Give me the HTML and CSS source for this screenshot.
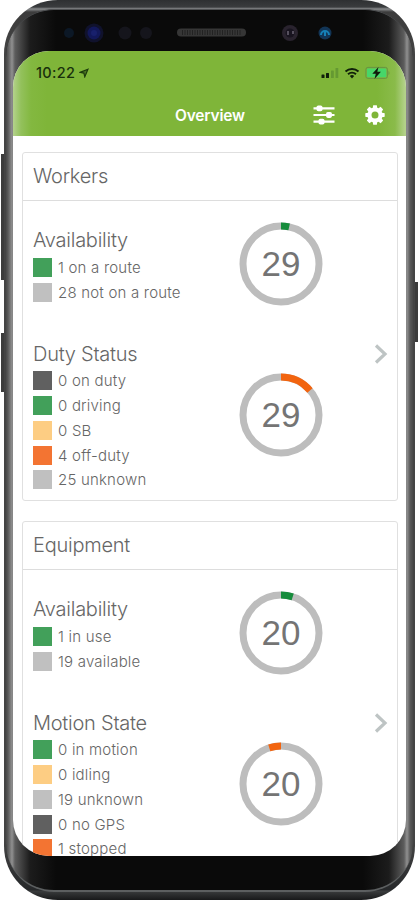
FILE: index.html
```html
<!DOCTYPE html>
<html lang="en">
<head>
  <meta charset="UTF-8" />
  <meta name="viewport" content="width=device-width, initial-scale=1.0"/>
  <title>Overview</title>
  <link rel="stylesheet" href="styles.css">
</head>
<body>
  <div class="device">
    <span class="side-button volume"></span>
    <span class="side-button bixby"></span>
    <span class="side-button power"></span>
    <div class="phone">
      <div class="bezel">
        <div class="sensors">
          <svg width="300" height="34" viewBox="0 0 300 34">
            <circle cx="15" cy="17" r="5" fill="#0c1826"/>
            <circle cx="40" cy="17" r="9.5" fill="#10122c"/>
            <circle cx="40" cy="17" r="6.5" fill="#12185a"/>
            <circle cx="40" cy="17" r="3" fill="#18206c"/>
            <circle cx="71" cy="17" r="6.5" fill="#15151c"/>
            <circle cx="92" cy="17" r="6" fill="#15151c"/>
            <rect x="123" y="12.500" width="69" height="8" rx="4" fill="#363636"/>
            <path d="M128 16.500h60" stroke="#222" stroke-width="5" stroke-dasharray="1 1.500"/>
            <circle cx="236" cy="17" r="8" fill="#29232e"/>
            <circle cx="236" cy="17" r="4.500" fill="#18141f"/>
            <path d="M234 15v4M239 15v3" stroke="#777080" stroke-width="1.300"/>
            <circle cx="271" cy="17" r="6.500" fill="#123556"/>
            <path d="M267 19a4 4 0 0 1 8 0M271 16v4" fill="none" stroke="#167fb5" stroke-width="2"/>
          </svg>
        </div>

        <div class="screen">
          <header class="topbar">
            <div class="status">
              <span class="time">10:22</span>
              <svg class="location" width="10" height="10" viewBox="0 0 10 10"><path d="M1 4.400L9 1.200 5.800 8.800 4.900 5.100z" fill="#4c7524" stroke="#1c3a0c" stroke-width="1.200"/></svg>
              <svg class="signal" width="18" height="12" viewBox="0 0 18 12">
                <rect x="0.500" y="7.500" width="3" height="3.500" rx=".6" fill="#10200a"/>
                <rect x="5" y="6" width="3" height="5" rx=".6" fill="#10200a"/>
                <rect x="10" y="3.500" width="2.800" height="7.500" rx=".6" fill="#659932"/>
                <rect x="14.500" y="1" width="2.800" height="10" rx=".6" fill="#659932"/>
              </svg>
              <svg class="wifi" width="16" height="12" viewBox="0 0 16 12">
                <path d="M1.500 4.500a9.500 9.500 0 0 1 13 0M4 7.300a6 6 0 0 1 8 0" fill="none" stroke="#10200a" stroke-width="2"/>
                <path d="M5.800 9a3.300 3.300 0 0 1 4.400 0L8 11.500z" fill="#10200a"/>
              </svg>
              <svg class="battery" width="25" height="14" viewBox="0 0 25 14">
                <rect x=".9" y="1.400" width="21.500" height="11" rx="2" fill="#80b33c" stroke="#679444"/>
                <rect x="2" y="2.500" width="19.300" height="8.800" rx="1" fill="#47d669"/>
                <path d="M23.500 5v4c1.300-.5 1.300-3.500 0-4z" fill="#679444"/>
                <path d="M13.500 1L7.300 7.800h3.500L9.500 13l6.400-7.200h-3.600z" fill="#111b0c"/>
              </svg>
            </div>
            <div class="nav">
              <h1>Overview</h1>
              <svg class="filters" width="22" height="20" viewBox="0 0 22 20">
                <path d="M.5 3.300h21M.5 10h21M.5 16.700h21" stroke="#fff" stroke-width="2.200"/>
                <rect x="3.500" y=".4" width="6" height="5.800" rx="1.800" fill="#fff"/>
                <rect x="13" y="7.100" width="6" height="5.800" rx="1.800" fill="#fff"/>
                <rect x="5.500" y="13.800" width="6" height="5.800" rx="1.800" fill="#fff"/>
              </svg>
              <svg class="gear" width="20" height="20" viewBox="0 0 20 20">
                <circle cx="10" cy="10" r="5.500" fill="none" stroke="#fff" stroke-width="4"/>
                <g fill="#fff">
                  <path id="tooth" d="M7.500 4L8.200.3h3.600L12.500 4z"/>
                  <use href="#tooth" transform="rotate(45 10 10)"/>
                  <use href="#tooth" transform="rotate(90 10 10)"/>
                  <use href="#tooth" transform="rotate(135 10 10)"/>
                  <use href="#tooth" transform="rotate(180 10 10)"/>
                  <use href="#tooth" transform="rotate(225 10 10)"/>
                  <use href="#tooth" transform="rotate(270 10 10)"/>
                  <use href="#tooth" transform="rotate(315 10 10)"/>
                </g>
              </svg>
            </div>
          </header>

          <main class="content">
            <section class="card">
              <h2>Workers</h2>
              <div class="metric">
                <div class="info">
                  <h3>Availability</h3>
                  <ul>
                    <li><i class="green"></i>1 on a route</li>
                    <li><i class="gray"></i>28 not on a route</li>
                  </ul>
                </div>
                <div class="ring">
                  <svg width="84" height="84" viewBox="0 0 84 84">
                    <circle class="track" cx="42" cy="42" r="38"/>
                    <circle class="arc arc-green" cx="42" cy="42" r="38" pathLength="29" stroke-dasharray="1 28"/>
                  </svg>
                  <span>29</span>
                </div>
              </div>
              <div class="metric">
                <div class="info">
                  <h3>Duty Status</h3>
                  <ul>
                    <li><i class="dark"></i>0 on duty</li>
                    <li><i class="green"></i>0 driving</li>
                    <li><i class="yellow"></i>0 SB</li>
                    <li><i class="orange"></i>4 off-duty</li>
                    <li><i class="gray"></i>25 unknown</li>
                  </ul>
                </div>
                <div class="ring">
                  <svg width="84" height="84" viewBox="0 0 84 84">
                    <circle class="track" cx="42" cy="42" r="38"/>
                    <circle class="arc arc-orange" cx="42" cy="42" r="38" pathLength="29" stroke-dasharray="4 25"/>
                  </svg>
                  <span>29</span>
                </div>
                <svg class="chevron" width="14" height="20" viewBox="0 0 14 20"><path d="M2 1.500L11 10l-9 8.500"/></svg>
              </div>
            </section>

            <section class="card">
              <h2>Equipment</h2>
              <div class="metric">
                <div class="info">
                  <h3>Availability</h3>
                  <ul>
                    <li><i class="green"></i>1 in use</li>
                    <li><i class="gray"></i>19 available</li>
                  </ul>
                </div>
                <div class="ring">
                  <svg width="84" height="84" viewBox="0 0 84 84">
                    <circle class="track" cx="42" cy="42" r="38"/>
                    <circle class="arc arc-green" cx="42" cy="42" r="38" pathLength="20" stroke-dasharray="1 19"/>
                  </svg>
                  <span>20</span>
                </div>
              </div>
              <div class="metric">
                <div class="info">
                  <h3>Motion State</h3>
                  <ul>
                    <li><i class="green"></i>0 in motion</li>
                    <li><i class="yellow"></i>0 idling</li>
                    <li><i class="gray"></i>19 unknown</li>
                    <li><i class="dark"></i>0 no GPS</li>
                    <li><i class="orange"></i>1 stopped</li>
                  </ul>
                </div>
                <div class="ring">
                  <svg width="84" height="84" viewBox="0 0 84 84">
                    <circle class="track" cx="42" cy="42" r="38"/>
                    <circle class="arc arc-orange" cx="42" cy="42" r="38" pathLength="20" stroke-dasharray="1 19" stroke-dashoffset="1"/>
                  </svg>
                  <span>20</span>
                </div>
                <svg class="chevron" width="14" height="20" viewBox="0 0 14 20"><path d="M2 1.500L11 10l-9 8.500"/></svg>
              </div>
            </section>
          </main>
        </div>
      </div>
    </div>
  </div>
</body>
</html>
```
FILE: styles.css
```css
* {
  margin: 0;
  padding: 0;
  box-sizing: border-box;
}

body {
  background-color: #ffffff;
  color: #666666;
  font-family: Inter, "Liberation Sans", sans-serif;
  height: 900px;
  overflow: hidden;
}

.device {
  position: relative;
  width: 418px;
  height: 900px;
  padding: 0 3px 0 4px;
}

.side-button {
  position: absolute;
  width: 5px;
  background-color: #3c3c3c;
}

.volume {
  left: 1px;
  top: 154px;
  height: 126px;
}

.bixby {
  left: 1px;
  top: 333px;
  height: 59px;
}

.power {
  right: 0;
  top: 282px;
  height: 60px;
}

/* metal frame */
.phone {
  position: relative;
  height: 900px;
  padding: 9px 2px 8px;
  border-radius: 54px;
  background: linear-gradient(#2e3032 0, #3a3c3e 7px, #8a8c8e 9px, #3c3c3c 12px, #444 60px, #444 840px, #26282a 890px, #3a3c3d 891px, #18191a 900px);
}

.bezel {
  height: 883px;
  padding: 42px 7px 35px;
  border-radius: 48px;
  border-top: 1px solid #505254;
  border-bottom: 2px solid #5c5f60;
  background:
    linear-gradient(90deg, #484848 0, #5a5a5a 2px, #909090 6px, rgba(120, 120, 120, 0.75) 9px, rgba(40, 40, 40, 0.6) 24px, rgba(10, 10, 10, 0) 50px, rgba(10, 10, 10, 0) 357px, rgba(40, 40, 40, 0.6) 383px, rgba(120, 120, 120, 0.75) 398px, #909090 401px, #5a5a5a 404px, #484848 407px),
    #0a0a0a;
}

.sensors {
  position: absolute;
  left: 50px;
  top: 16px;
}

.screen {
  height: 805px;
  margin-top: -1px;
  border-radius: 36px;
  overflow: hidden;
  background-color: #ffffff;
}

.topbar {
  height: 85px;
  background: linear-gradient(90deg, #b4d28c 0, #93c15c 8px, #83b840 18px, #7fb539 34px, #7fb539 364px, #8abb4a 382px, #b3d18a 392px);
}

.status {
  display: flex;
  align-items: center;
  height: 43px;
  padding: 0 16px 0 23px;
}

.time {
  color: #18300c;
  font-size: 14.5px;
  font-weight: 500;
  letter-spacing: 0.3px;
}

.location {
  margin-left: 4px;
}

.signal {
  margin-left: auto;
}

.wifi {
  margin-left: 5px;
}

.battery {
  margin-left: 5px;
}

.nav {
  display: flex;
  align-items: center;
  height: 42px;
  padding: 0 21px 0 162px;
}

.nav h1 {
  color: #ffffff;
  font-size: 15.5px;
  font-weight: 600;
  letter-spacing: -0.2px;
}

.filters {
  margin-left: auto;
}

.gear {
  margin-left: 30px;
}

.content {
  display: flex;
  flex-direction: column;
  gap: 20px;
  padding: 16px 8px 0 9px;
}

.card {
  height: 349px;
  border: 1px solid #e0e0e0;
  border-radius: 3px;
  flex-shrink: 0;
}

.card h2 {
  height: 48px;
  padding-left: 10px;
  border-bottom: 1px solid #dddddd;
  font-size: 20px;
  font-weight: 300;
  line-height: 47px;
  letter-spacing: -0.25px;
}

.metric {
  display: grid;
  grid-template-columns: 206px 84px 1fr;
  align-items: center;
  padding: 27px 9px 0 10px;
}

.metric + .metric {
  padding-top: 37px;
}

.info h3 {
  height: 27px;
  font-size: 20px;
  font-weight: 300;
  line-height: 24px;
  letter-spacing: -0.25px;
}

.info ul {
  list-style: none;
}

.info li {
  display: flex;
  align-items: center;
  gap: 6px;
  height: 24.75px;
  font-size: 15px;
  font-weight: 300;
  letter-spacing: 0.2px;
  white-space: nowrap;
}

.info i {
  width: 19px;
  height: 19px;
}

.green {
  background-color: #42a05a;
}

.gray {
  background-color: #c0c0c0;
}

.dark {
  background-color: #606060;
}

.yellow {
  background-color: #fdcd83;
}

.orange {
  background-color: #f37432;
}

/* the ring drawing may overflow its row */
.ring {
  display: grid;
  grid-template: 70px / 84px;
  place-items: center;
  margin-bottom: 4px;
}

.ring svg,
.ring span {
  grid-area: 1 / 1;
}

.ring span {
  color: #747474;
  font-family: "Liberation Sans", Arial, sans-serif;
  font-size: 35px;
}

.track,
.arc {
  fill: none;
  stroke: #bdbdbd;
  stroke-width: 7;
}

.arc {
  transform: rotate(-90deg);
  transform-origin: 42px 42px;
}

.arc-green {
  stroke: #168c3c;
}

.arc-orange {
  stroke: #f2640f;
}

.chevron {
  align-self: start;
  justify-self: end;
  margin-top: 2px;
}

.chevron path {
  fill: none;
  stroke: #bec4c4;
  stroke-width: 3.2;
}
```
